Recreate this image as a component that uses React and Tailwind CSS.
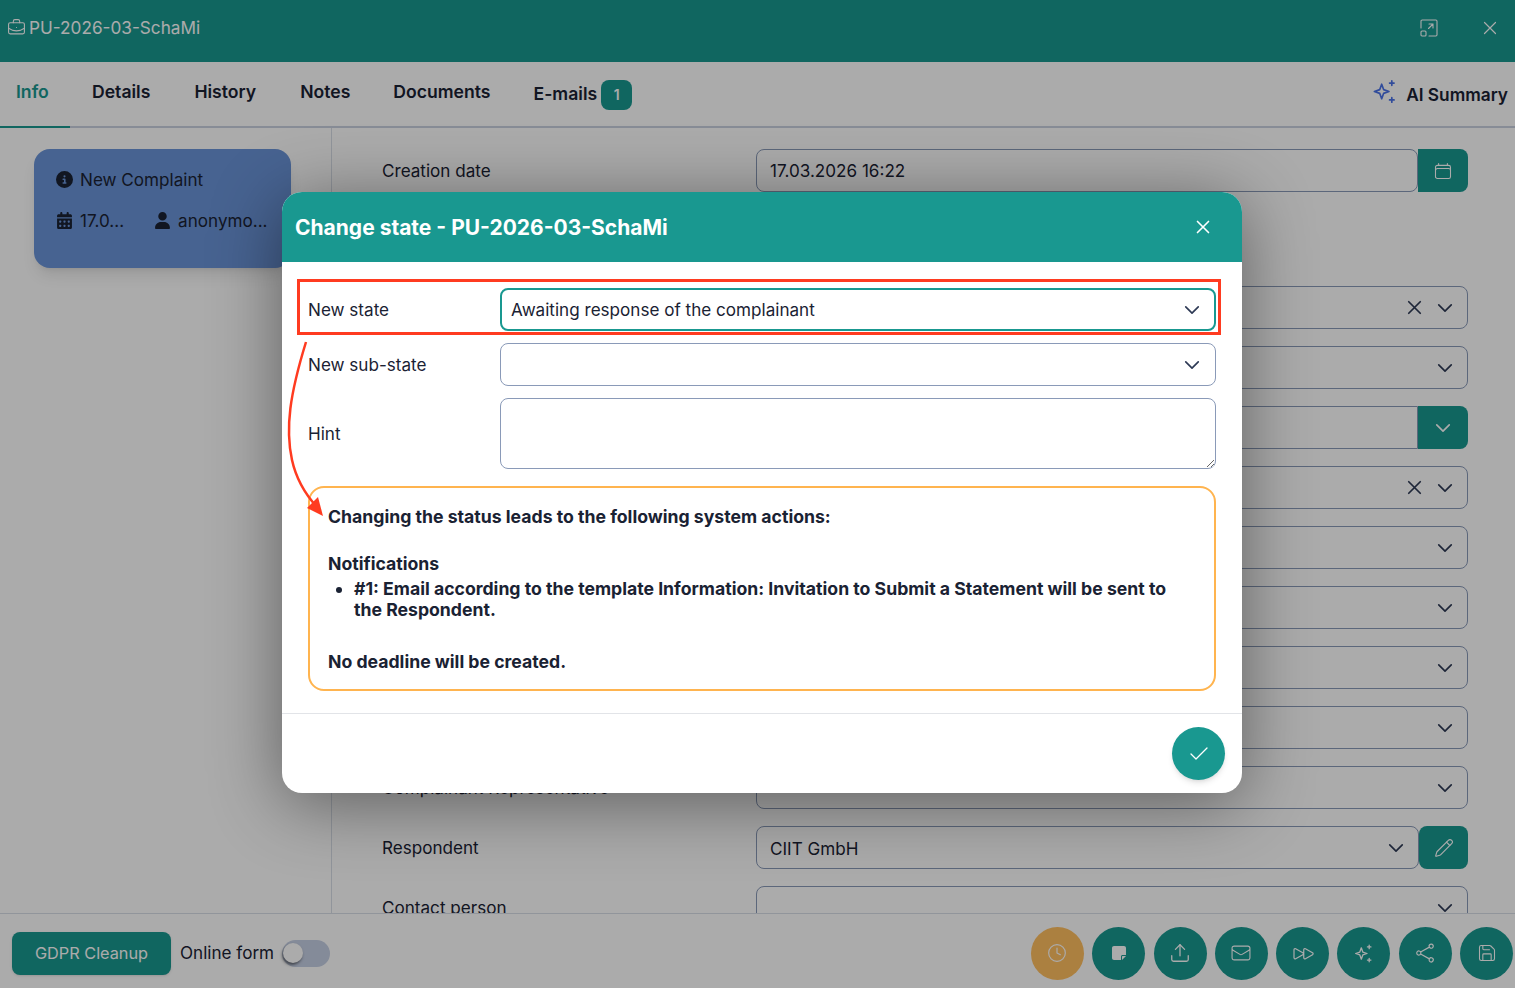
import React from 'react';
import { BriefcaseBusiness, Clock, Upload, Save, Pencil, Check } from 'lucide-react';
import { FaCircleInfo, FaCalendarDays, FaUser, FaNoteSticky } from 'react-icons/fa6';
import {
  HiOutlineCalendar,
  HiOutlineChevronDown,
  HiOutlineEnvelope,
  HiOutlineForward,
  HiOutlineShare,
  HiOutlineXMark,
} from 'react-icons/hi2';

function SparkleIcon({ className }) {
  return (
    <svg className={className} viewBox="0 0 24 24" fill="none" stroke="currentColor" strokeWidth="1.5" strokeLinejoin="round" strokeLinecap="round">
      <path d="M9.5 5.5 11.2 10.3 16 12l-4.8 1.7-1.7 4.8-1.7-4.8L3 12l4.8-1.7z" />
      <path d="M18.5 2.5v4M16.5 4.5h4M18.5 17.5v4M16.5 19.5h4" />
    </svg>
  );
}

function ExpandIcon({ className }) {
  return (
    <svg className={className} viewBox="0 0 18 18" fill="none" stroke="currentColor" strokeWidth="1.1" strokeLinecap="round" strokeLinejoin="round">
      <path d="M1 9V2.2C1 1.5 1.5 1 2.2 1h13.6c.7 0 1.2.5 1.2 1.2v13.6c0 .7-.5 1.2-1.2 1.2H9" />
      <rect x="1" y="12" width="5" height="5" rx="1" />
      <path d="M8.5 9.5 13 5M9 5h4v4" />
    </svg>
  );
}

function Chevron({ className = '' }) {
  return <HiOutlineChevronDown className={`h-[20px] w-[20px] text-[#2e3a55] ${className}`} strokeWidth={2} />;
}

function SelectBox({ clear }) {
  return (
    <div className="flex h-[43px] flex-1 items-center justify-end gap-[9px] rounded-lg border border-[#8a9ab8] pr-[12px]">
      {clear && <HiOutlineXMark className="h-[23px] w-[23px] text-[#2e3a55]" strokeWidth={1.8} />}
      <Chevron />
    </div>
  );
}

function FormRow({ label, className = '', children }) {
  return (
    <div className={`flex items-center ${className}`}>
      <span className="w-[374px] shrink-0 pt-[1px]">{label}</span>
      <div className="flex flex-1">{children}</div>
    </div>
  );
}

const actionButtons = [
  { Icon: Clock, bg: 'bg-[#ffbf60]', size: 'h-[20px] w-[20px]', stroke: 1.4 },
  { Icon: FaNoteSticky, bg: 'bg-[#199890]', size: 'h-[16px] w-[16px]' },
  { Icon: Upload, bg: 'bg-[#199890]', size: 'h-[22px] w-[22px]', stroke: 1.4 },
  { Icon: HiOutlineEnvelope, bg: 'bg-[#199890]', size: 'h-[22px] w-[22px]', stroke: 1.2 },
  { Icon: HiOutlineForward, bg: 'bg-[#199890]', size: 'h-[24px] w-[24px]', stroke: 1.2 },
  { Icon: SparkleIcon, bg: 'bg-[#199890]', size: 'h-[21px] w-[21px]' },
  { Icon: HiOutlineShare, bg: 'bg-[#199890]', size: 'h-[22px] w-[22px]', stroke: 1.3 },
  { Icon: Save, bg: 'bg-[#199890]', size: 'h-[20px] w-[20px]', stroke: 1.3 },
];

function BackgroundPage() {
  return (
    <div className="flex h-full flex-col bg-white">
      <header className="flex h-[62px] shrink-0 items-center bg-[#199890] pb-[7px] pl-[7px] pr-[14px] text-white">
        <BriefcaseBusiness className="h-[19px] w-[19px]" strokeWidth={1.4} />
        <span className="ml-[3px] text-[17.2px]">PU-2026-03-SchaMi</span>
        <ExpandIcon className="ml-auto h-[18px] w-[18px]" />
        <HiOutlineXMark className="ml-[41px] h-[22px] w-[22px]" strokeWidth={1.3} />
      </header>

      <nav className="flex h-[66px] shrink-0 border-b-2 border-[#c9d1e0] text-[17.6px] font-semibold">
        <div className="-mb-[2px] flex w-[70px] items-center border-b-2 border-[#199890] pb-[3px] pl-4 text-[#199890]">Info</div>
        <div className="flex items-center px-[22px] pb-[3px]">Details</div>
        <div className="flex items-center px-[22px] pb-[3px]">History</div>
        <div className="flex items-center pb-[3px] pl-[22px] pr-[21.5px]">Notes</div>
        <div className="flex items-center pb-[3px] pl-[21.5px] pr-[21.5px]">Documents</div>
        <div className="flex items-center gap-[4px] pl-[21.5px] pt-[1px]">
          E-mails
          <span className="flex h-[30px] w-[31px] items-center justify-center rounded-lg bg-[#199890] text-[14px] text-white">1</span>
        </div>
        <div className="ml-auto flex items-center gap-[8px] pr-[7px] pt-[2px] text-[17.3px]">
          <SparkleIcon className="h-[27px] w-[27px] -translate-y-[4px] text-[#4a72e8]" />
          AI Summary
        </div>
      </nav>

      <div className="flex min-h-0 flex-1">
        <aside className="w-[332px] shrink-0 border-r border-[#d9dee8] pl-[34px] pt-[21px]">
          <div className="h-[119px] w-[257px] rounded-2xl bg-[#6a94d8] pl-[22px] pr-[20px] pt-[18px] shadow-lg">
            <div className="flex items-center gap-[7px]">
              <FaCircleInfo className="h-[17px] w-[17px]" />
              New Complaint
            </div>
            <div className="mt-[15px] flex items-center">
              <FaCalendarDays className="h-[17px] w-[17px]" />
              <span className="ml-[7px]">17.0...</span>
              <FaUser className="ml-[30px] h-[17px] w-[17px]" />
              <span className="ml-[7px]">anonymo...</span>
            </div>
          </div>
        </aside>

        <main className="min-h-0 flex-1 overflow-hidden pl-[50px] pr-[47px] pt-[21px]">
          <FormRow label="Creation date" className="mb-[94px]">
            <div className="flex h-[43px] flex-1 items-center rounded-l-lg rounded-r-lg border border-[#8a9ab8] pl-[13px] pt-[1px]">17.03.2026 16:22</div>
            <div className="flex w-[50px] items-center justify-center rounded-r-lg bg-[#199890] text-white">
              <HiOutlineCalendar className="h-[20px] w-[20px]" strokeWidth={1.3} />
            </div>
          </FormRow>
          <FormRow className="mb-[17px]"><SelectBox clear /></FormRow>
          <FormRow className="mb-[17px]"><SelectBox /></FormRow>
          <FormRow className="mb-[17px]">
            <div className="h-[43px] flex-1 rounded-l-lg border border-[#8a9ab8]" />
            <div className="flex w-[50px] items-center justify-center rounded-r-lg bg-[#199890] text-white">
              <HiOutlineChevronDown className="h-[20px] w-[20px]" strokeWidth={2} />
            </div>
          </FormRow>
          <FormRow className="mb-[17px]"><SelectBox clear /></FormRow>
          <FormRow className="mb-[17px]"><SelectBox /></FormRow>
          <FormRow className="mb-[17px]"><SelectBox /></FormRow>
          <FormRow className="mb-[17px]"><SelectBox /></FormRow>
          <FormRow className="mb-[17px]"><SelectBox /></FormRow>
          <FormRow label="Complainant Representative" className="mb-[17px]"><SelectBox /></FormRow>
          <FormRow label="Respondent" className="mb-[17px]">
            <div className="flex h-[43px] flex-1 items-center justify-between rounded-lg border border-[#8a9ab8] pl-[13px] pr-[12px]">
              <span className="pt-[3px]">CIIT GmbH</span>
              <Chevron />
            </div>
            <div className="flex w-[49px] items-center justify-center rounded-lg bg-[#199890] text-white">
              <Pencil className="h-[20px] w-[20px]" strokeWidth={1.4} />
            </div>
          </FormRow>
          <FormRow label="Contact person"><SelectBox /></FormRow>
        </main>
      </div>

      <footer className="flex h-[75px] shrink-0 items-center border-t border-[#d9dee8] pl-[12px] pr-[2px] pt-[4px]">
        <button className="h-[43px] w-[159px] rounded-lg bg-[#199890] text-[16.3px] text-white shadow-sm">GDPR Cleanup</button>
        <span className="ml-[9px]">Online form</span>
        <div className="ml-[8px] flex h-[27px] w-[48px] items-center rounded-full bg-[#c5cfe4] pl-[1px]">
          <div className="h-[20px] w-[20px] rounded-full bg-white shadow-[-1px_2px_3px_rgba(0,0,0,0.5)]" />
        </div>
        <div className="ml-auto flex gap-[8.3px]">
          {actionButtons.map(({ Icon, bg, size, stroke }, idx) => (
            <div key={idx} className={`flex h-[53px] w-[53px] items-center justify-center rounded-full text-white ${bg}`}>
              <Icon className={size} strokeWidth={stroke} />
            </div>
          ))}
        </div>
      </footer>
    </div>
  );
}

function ChangeStateModal() {
  return (
    <div className="relative h-[601px] w-[960px] overflow-hidden rounded-[20px] bg-white shadow-[0_10px_70px_rgba(0,0,0,0.45)]">
      <div className="flex h-[70px] items-center justify-between bg-[#199890] pl-[13px] pr-[28px] text-white">
        <h2 className="pt-[2px] text-[21px] font-bold">Change state - PU-2026-03-SchaMi</h2>
        <HiOutlineXMark className="h-[22px] w-[22px]" strokeWidth={1.8} />
      </div>

      <div className="flex flex-col gap-[12px] pl-[26px] pr-[26px] pt-[26px]">
        <div className="flex items-center">
          <span className="w-[192px] shrink-0">New state</span>
          <div className="flex h-[43px] flex-1 items-center justify-between rounded-lg border-2 border-[#199890] pl-[9px] pr-[12px]">
            <span className="pt-[1px]">Awaiting response of the complainant</span>
            <Chevron />
          </div>
        </div>
        <div className="flex items-center">
          <span className="w-[192px] shrink-0">New sub-state</span>
          <div className="flex h-[43px] flex-1 items-center justify-end rounded-lg border border-[#8a9ab8] pr-[13px]">
            <Chevron />
          </div>
        </div>
        <div className="flex items-center">
          <span className="w-[192px] shrink-0">Hint</span>
          <textarea className="block h-[71px] flex-1 rounded-lg border border-[#8a9ab8] outline-none" />
        </div>
      </div>

      <div className="ml-[26px] mr-[26px] mt-[17px] h-[205px] rounded-2xl border-2 border-[#ffb44f] pl-[18px] pr-[20px] pt-[18px] text-[17.65px] font-bold leading-[21px]">
        <p>Changing the status leads to the following system actions:</p>
        <p className="mt-[26px]">Notifications</p>
        <ul className="ml-[26px] mt-[4px] list-disc">
          <li>#1: Email according to the template Information: Invitation to Submit a Statement will be sent to the Respondent.</li>
        </ul>
        <p className="mt-[31px]">No deadline will be created.</p>
      </div>

      <div className="mt-[22px] flex h-[80px] items-center justify-end border-t border-[#e2e4e8] pr-[17px]">
        <div className="flex h-[53px] w-[53px] items-center justify-center rounded-full bg-[#199890] text-white shadow-md">
          <Check className="h-[24px] w-[24px]" strokeWidth={1.3} />
        </div>
      </div>

      {/* annotation drawn on top of the dialog */}
      <div className="pointer-events-none absolute left-[15px] top-[87px] h-[56px] w-[924px] border-[3px] border-[#ff3b20]" />
      <svg className="pointer-events-none absolute left-0 top-[140px] h-[200px] w-[60px]" viewBox="0 0 60 200" fill="none">
        <path d="M24 10C8 62 3 96 10 128c4 18 13 34 25 47" stroke="#ff3b20" strokeWidth="2.5" />
        <path d="M41 184 25 176 36 165z" fill="#ff3b20" />
      </svg>
    </div>
  );
}

export default function App() {
  return (
    <div className="relative h-screen w-full overflow-hidden font-['Inter',sans-serif] text-[17.1px] text-[#1a2233]">
      <BackgroundPage />
      <div className="absolute inset-0 flex items-start bg-black/33 pl-[282px] pt-[192px]">
        <ChangeStateModal />
      </div>
    </div>
  );
}
